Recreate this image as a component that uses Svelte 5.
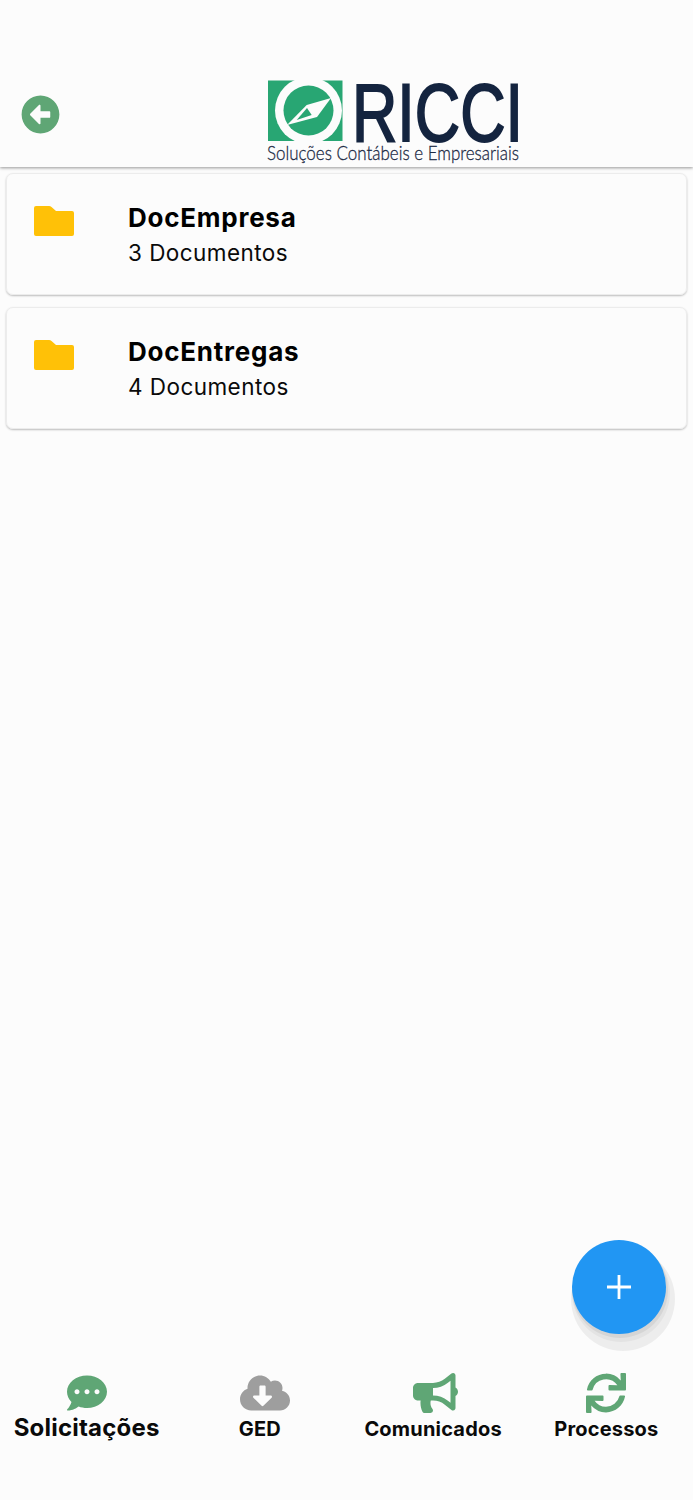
<script>
    var folders = [
        { name: "DocEmpresa", count: "3 Documentos" },
        { name: "DocEntregas", count: "4 Documentos" },
    ];
    var tabs = [
        { label: "Solicitações", icon: "chat", active: true },
        { label: "GED", icon: "cloud", muted: true },
        { label: "Comunicados", icon: "horn" },
        { label: "Processos", icon: "sync" },
    ];
</script>

{#snippet tabIcon(name)}
    {#if name == "chat"}
        <svg class="chat" aria-hidden="true" viewBox="0 0 512 512" fill="currentColor"
            ><path
                d="M256 32C114.6 32 0 125.1 0 240c0 49.6 21.4 95 57 130.7C44.5 421.1 2.7 466 2.2 466.5c-2.2 2.3-2.8 5.7-1.5 8.7S4.8 480 8 480c66.3 0 116-31.8 140.6-51.4 32.7 12.3 69 19.4 107.4 19.4 141.4 0 256-93.1 256-208S397.4 32 256 32zM128 272c-17.7 0-32-14.3-32-32s14.3-32 32-32 32 14.3 32 32-14.3 32-32 32zm128 0c-17.7 0-32-14.3-32-32s14.3-32 32-32 32 14.3 32 32-14.3 32-32 32zm128 0c-17.7 0-32-14.3-32-32s14.3-32 32-32 32 14.3 32 32-14.3 32-32 32z"
            ></path></svg
        >
    {:else if name == "cloud"}
        <svg class="cloud" aria-hidden="true" viewBox="0 0 640 512" fill="currentColor"
            ><path
                d="M537.6 226.6c4.1-10.7 6.4-22.4 6.4-34.6 0-53-43-96-96-96-19.7 0-38.1 6-53.3 16.2C367 64.2 315.3 32 256 32c-88.4 0-160 71.6-160 160 0 2.7.1 5.4.2 8.1C40.2 219.8 0 273.2 0 336c0 79.5 64.5 144 144 144h368c70.7 0 128-57.3 128-128 0-61.9-44-113.6-102.4-125.4zm-132.9 88.7L299.3 420.7c-6.2 6.2-16.4 6.2-22.6 0L171.3 315.3c-10.1-10.1-2.9-27.3 11.3-27.3H248V176c0-8.8 7.2-16 16-16h48c8.8 0 16 7.2 16 16v112h65.4c14.2 0 21.4 17.2 11.3 27.3z"
            ></path></svg
        >
    {:else if name == "horn"}
        <svg class="horn" aria-hidden="true" viewBox="0 0 576 512" fill="currentColor"
            ><path
                d="M576 240c0-23.63-12.95-44.04-32-55.12V32.01C544 23.26 537.02 0 512 0c-7.12 0-14.19 2.38-19.98 7.02l-85.03 68.03C364.28 109.19 310.66 128 256 128H64c-35.35 0-64 28.65-64 64v96c0 35.35 28.65 64 64 64h33.7c-1.39 10.48-2.18 21.14-2.18 32 0 39.77 9.26 77.35 25.56 110.94 5.19 10.69 16.52 17.06 28.4 17.06h74.28c26.05 0 41.69-29.84 25.9-50.56-16.4-21.52-26.15-48.36-26.15-77.44 0-11.11 1.62-21.79 4.41-32H256c54.66 0 108.28 18.81 150.98 52.95l85.03 68.03a32.023 32.023 0 0 0 19.98 7.02c24.92 0 32-22.78 32-32V295.13C563.05 284.04 576 263.63 576 240zm-96 141.42l-33.05-26.44C392.95 311.78 325.12 288 256 288v-96c69.12 0 136.95-23.78 190.95-66.98L480 98.58v282.84z"
            ></path></svg
        >
    {:else}
        <svg class="sync" aria-hidden="true" viewBox="0 0 512 512" fill="currentColor"
            ><path
                d="M440.65 12.57l4 82.77A247.16 247.16 0 0 0 255.83 8C134.73 8 33.91 94.92 12.29 209.82A12 12 0 0 0 24.09 224h49.05a12 12 0 0 0 11.67-9.26 175.91 175.91 0 0 1 317-56.94l-101.46-4.86a12 12 0 0 0-12.57 12v47.41a12 12 0 0 0 12 12H500a12 12 0 0 0 12-12V12a12 12 0 0 0-12-12h-47.37a12 12 0 0 0-11.98 12.57zM255.83 432a175.61 175.61 0 0 1-146-77.8l101.8 4.87a12 12 0 0 0 12.57-12v-47.4a12 12 0 0 0-12-12H12a12 12 0 0 0-12 12V500a12 12 0 0 0 12 12h47.35a12 12 0 0 0 12-12.6l-4.15-82.57A247.17 247.17 0 0 0 255.83 504c121.11 0 221.93-86.92 243.55-201.82a12 12 0 0 0-11.8-14.18h-49.05a12 12 0 0 0-11.67 9.26A175.86 175.86 0 0 1 255.83 432z"
            ></path></svg
        >
    {/if}
{/snippet}

<div class="page">
    <header>
        <button class="back" title="voltar">
            <svg aria-hidden="true" viewBox="0 0 512 512" fill="currentColor"
                ><path
                    d="M256 504C119 504 8 393 8 256S119 8 256 8s248 111 248 248-111 248-248 248zm116-292H256v-70.9c0-10.7-13-16.1-20.5-8.5L121.2 247.5c-4.7 4.7-4.7 12.2 0 16.9l114.3 114.9c7.6 7.6 20.5 2.2 20.5-8.5V300h116c6.6 0 12-5.4 12-12v-64c0-6.6-5.4-12-12-12z"
                ></path></svg
            >
        </button>
        <svg class="logo" viewBox="0 -20 360 110" role="img" aria-label="Ricci Soluções Contábeis e Empresariais">
            <rect x="1" y="0.500" width="74.500" height="60.500" fill="#28a673"></rect>
            <circle cx="41.500" cy="30.500" r="33.500" fill="#fcfcfc"></circle>
            <rect x="40" y="-5" width="4" height="5.500" fill="#fcfcfc"></rect>
            <circle cx="41.500" cy="30.500" r="25" fill="#28a673"></circle>
            <path d="M20 45 L39.700 25 L64 18 L50 37 Z" fill="#fcfcfc"></path>
            <path d="M29.700 40 L40 28 L44.700 35 Z" fill="#28a673"></path>
            <text class="brand" x="85" y="60.500" textLength="171" lengthAdjust="spacingAndGlyphs">RICCI</text>
            <text class="tagline" x="0" y="80" textLength="252" lengthAdjust="spacingAndGlyphs">Soluções Contábeis e Empresariais</text>
        </svg>
    </header>

    <main>
        {#each folders as folder}
            <div class="card">
                <svg class="folder" aria-hidden="true" viewBox="0 0 40 30" fill="#ffc107"
                    ><path
                        d="M2 0h13q1.500 0 2.500 1L22 5h16q2 0 2 2v21q0 2-2 2H2q-2 0-2-2V2q0-2 2-2z"
                    ></path></svg
                >
                <div class="info">
                    <p class="name">{folder.name}</p>
                    <p class="count">{folder.count}</p>
                </div>
            </div>
        {/each}
    </main>

    <button class="fab" title="novo">
        <svg aria-hidden="true" viewBox="0 0 24 24" fill="#fff"
            ><path d="M10.600 0h2.800v10.600H24v2.800H13.400V24h-2.800V13.400H0v-2.800h10.600z"></path></svg
        >
    </button>

    <nav>
        {#each tabs as tab}
            <div class="tab" class:active={tab.active} class:muted={tab.muted}>
                {@render tabIcon(tab.icon)}
                <span>{tab.label}</span>
            </div>
        {/each}
    </nav>
</div>

<style>
    :global(body) {
        background: #fcfcfc;
    }

    .page {
        position: relative;
        display: flex;
        flex-direction: column;
        height: 1500px;
        font-family: Inter, "Liberation Sans", sans-serif;
        color: #0a0a0a;
        overflow: hidden;
    }

    header {
        display: flex;
        align-items: flex-end;
        height: 167px;
        padding-left: 21px;
        box-sizing: border-box;
        box-shadow: 0 1px 3px rgba(0, 0, 0, 0.4);
    }

    .back {
        width: 39px;
        height: 39px;
        margin-bottom: 33px;
        padding: 0;
        border: 0;
        background: none;
        color: #5fa675;
    }

    .back svg {
        display: block;
        width: 39px;
        height: 39px;
    }

    .logo {
        width: 360px;
        height: 110px;
        margin-left: 207px;
        margin-bottom: -3px;
    }

    .brand {
        font-family: "Liberation Sans", sans-serif;
        font-size: 81px;
        fill: #14243f;
        stroke: #14243f;
        stroke-width: 2px;
    }

    .tagline {
        font-family: Lato, sans-serif;
        font-size: 20px;
        font-weight: 300;
        fill: #1c2b45;
        stroke: #1c2b45;
        stroke-width: 0.3px;
    }

    main {
        display: flex;
        flex-direction: column;
        gap: 12px;
        padding: 6px 6px 0;
        flex: 1;
    }

    .card {
        display: flex;
        align-items: flex-start;
        height: 122px;
        box-sizing: border-box;
        padding: 32px 0 0 27px;
        border-radius: 7px;
        border: 1px solid #ececec;
        box-shadow: 0 1px 2px rgba(0, 0, 0, 0.25);
    }

    .folder {
        width: 40px;
        height: 30px;
    }

    .info {
        margin-left: 54px;
        margin-top: -4px;
    }

    .name {
        margin: 0;
        font-size: 26px;
        line-height: 32px;
        font-weight: 700;
        letter-spacing: 0.75px;
        color: #000;
    }

    .count {
        margin: 4px 0 0;
        font-size: 22.500px;
        line-height: 30px;
        letter-spacing: 0.45px;
    }

    .fab {
        position: absolute;
        left: 572px;
        top: 1240px;
        display: grid;
        place-content: center;
        width: 94px;
        height: 94px;
        padding: 0;
        border: 0;
        border-radius: 50%;
        background: #2196f3;
        box-shadow:
            1px 3px 0 1px rgba(0, 0, 0, 0.06),
            2px 6px 0 2px rgba(0, 0, 0, 0.04),
            4px 12px 0 5px rgba(0, 0, 0, 0.06);
    }

    .fab svg {
        display: block;
        width: 24px;
        height: 24px;
    }

    nav {
        display: grid;
        grid-template-columns: repeat(4, 1fr);
        height: 127px;
    }

    .tab {
        display: flex;
        flex-direction: column;
        align-items: center;
        color: #5fa675;
    }

    .tab svg {
        display: block;
        height: 40px;
        flex: none;
    }

    .tab .cloud {
        margin-left: 10px;
    }

    .tab .horn {
        margin-left: 4px;
    }

    .tab.muted {
        color: #9e9e9e;
    }

    .tab span {
        color: #0a0a0a;
        margin-top: 3px;
        font-size: 20px;
        line-height: 26px;
        font-weight: 700;
        letter-spacing: 0.2px;
        white-space: nowrap;
    }

    .tab.active span {
        margin-top: 0;
        font-size: 24px;
        line-height: 30px;
    }
</style>
